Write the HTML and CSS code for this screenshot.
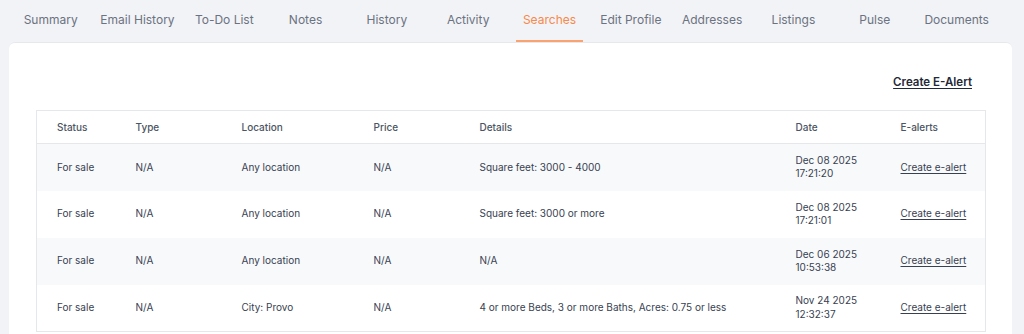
FILE: index.html
```html
<!DOCTYPE html>
<html lang="en">
<head>
<meta charset="utf-8">
<title>Searches</title>
<link rel="stylesheet" href="styles.css">
</head>
<body>
<nav class="tabs">
  <a class="tab"><span class="tab-label">Summary</span></a>
  <a class="tab"><span class="tab-label">Email History</span></a>
  <a class="tab"><span class="tab-label">To-Do List</span></a>
  <a class="tab"><span class="tab-label">Notes</span></a>
  <a class="tab"><span class="tab-label">History</span></a>
  <a class="tab"><span class="tab-label">Activity</span></a>
  <a class="tab active"><span class="tab-label">Searches</span></a>
  <a class="tab"><span class="tab-label">Edit Profile</span></a>
  <a class="tab"><span class="tab-label">Addresses</span></a>
  <a class="tab"><span class="tab-label">Listings</span></a>
  <a class="tab"><span class="tab-label">Pulse</span></a>
  <a class="tab"><span class="tab-label">Documents</span></a>
</nav>
<main class="card">
  <div class="toolbar">
    <a class="create-alert">Create E-Alert</a>
  </div>
  <table class="searches">
    <colgroup>
      <col class="c-status"><col class="c-type"><col class="c-loc"><col class="c-price"><col class="c-details"><col class="c-date"><col class="c-alert">
    </colgroup>
    <thead>
      <tr><th>Status</th><th>Type</th><th>Location</th><th>Price</th><th>Details</th><th>Date</th><th>E-alerts</th></tr>
    </thead>
    <tbody>
      <tr><td>For sale</td><td>N/A</td><td>Any location</td><td>N/A</td><td>Square feet: 3000 - 4000</td><td>Dec 08 2025<br>17:21:20</td><td><a class="row-link">Create e-alert</a></td></tr>
      <tr><td>For sale</td><td>N/A</td><td>Any location</td><td>N/A</td><td>Square feet: 3000 or more</td><td>Dec 08 2025<br>17:21:01</td><td><a class="row-link">Create e-alert</a></td></tr>
      <tr><td>For sale</td><td>N/A</td><td>Any location</td><td>N/A</td><td>N/A</td><td>Dec 06 2025<br>10:53:38</td><td><a class="row-link">Create e-alert</a></td></tr>
      <tr><td>For sale</td><td>N/A</td><td>City: Provo</td><td>N/A</td><td>4 or more Beds, 3 or more Baths, Acres: 0.75 or less</td><td>Nov 24 2025<br>12:32:37</td><td><a class="row-link">Create e-alert</a></td></tr>
    </tbody>
  </table>
</main>
</body>
</html>
```

FILE: styles.css
```css
* { box-sizing: border-box; }
html, body { margin: 0; padding: 0; }
body {
  background: #f2f3f7;
  font-family: Inter, "Noto Sans", "Liberation Sans", sans-serif;
  color: #374151;
  overflow: hidden;
}
.tabs {
  display: flex;
  margin-left: 10px;
  width: 988px;
  height: 42px;
}
.tab {
  flex: 1 1 0;
  padding: 0 2px;
  display: flex;
  justify-content: center;
  white-space: nowrap;
  font-size: 12px;
  color: #6b7280;
  cursor: pointer;
}
.tab-label {
  display: block;
  height: 42px;
  padding: 12px 7px 0;
  line-height: 16px;
  border-bottom: 2px solid transparent;
}
.tab.active .tab-label {
  color: #f7894a;
  border-bottom-color: #fba271;
}
.card {
  margin-left: 9px;
  width: 1003px;
  height: 300px;
  background: #fff;
  border-radius: 6px;
  border-top: 1px solid #e6e8ee;
  padding: 31px 27px 0;
}
.toolbar {
  display: flex;
  justify-content: flex-end;
  padding-right: 13px;
  height: 16px;
  margin-bottom: 20px;
}
.create-alert {
  font-size: 11.5px;
  line-height: 16px;
  font-weight: 600;
  color: #1f2937;
  text-decoration: underline;
  text-underline-offset: 2px;
}
.searches {
  width: 949px;
  border-collapse: collapse;
  table-layout: fixed;
  border: 1px solid #e5e7eb;
  font-size: 10px;
}
.c-status { width: 99px; }
.c-type { width: 106px; }
.c-loc { width: 132px; }
.c-price { width: 106px; }
.c-details { width: 316px; }
.c-date { width: 105px; }
.c-alert { width: 85px; }
.searches th, .searches td {
  text-align: left;
  padding: 0;
  vertical-align: middle;
}
.searches th:first-child, .searches td:first-child { padding-left: 20px; }
.searches th {
  height: 33px;
  font-weight: 500;
  color: #4b5563;
  border-bottom: 1px solid #e5e7eb;
}
.searches td {
  height: 47px;
  line-height: 13.5px;
  color: #374151;
}
.searches tbody tr:nth-child(odd) { background: #f8f9fb; }
.row-link {
  color: #374151;
  text-decoration: underline;
  text-underline-offset: 2px;
}
```
